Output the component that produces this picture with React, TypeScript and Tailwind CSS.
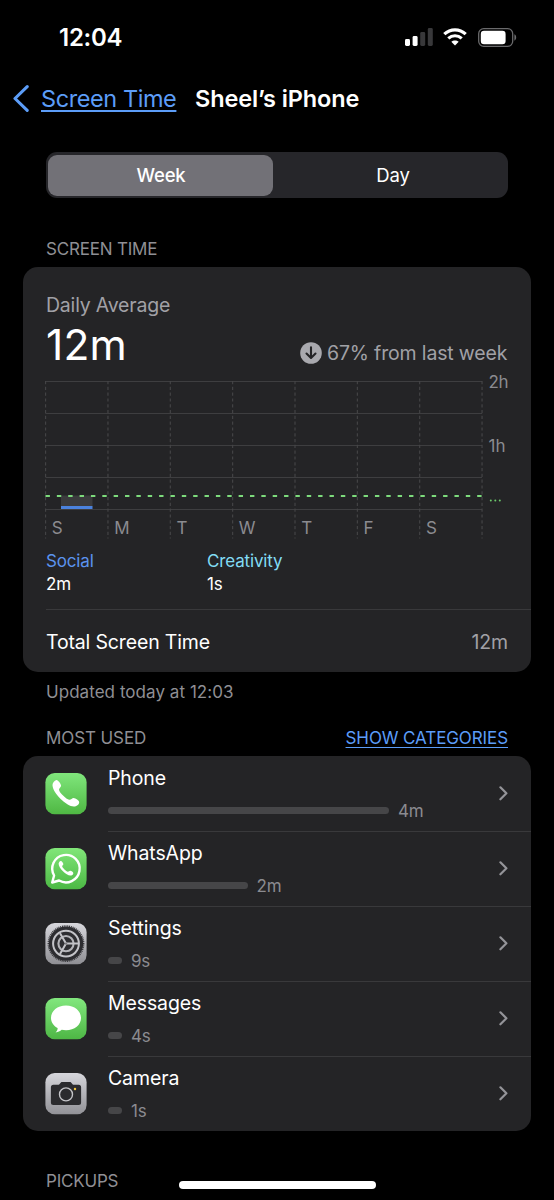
import type { ReactNode } from 'react';

const days = ['S', 'M', 'T', 'W', 'T', 'F', 'S'];

function StatusBar() {
  return (
    <div className="flex h-[74px] items-center justify-between pl-[59px] pr-[37px]">
      <span className="pt-px text-[24px] font-semibold leading-6 tracking-[-0.25px]">12:04</span>
      <div className="flex items-center">
        <svg width="28" height="18" viewBox="0 0 28 18" className="mr-[10px]">
          <rect x="0" y="11" width="5" height="7" rx="1.4" fill="#fff" />
          <rect x="7.6" y="8" width="5" height="10" rx="1.4" fill="#fff" />
          <rect x="15.2" y="4" width="5" height="14" rx="1.4" fill="#38383a" />
          <rect x="22.8" y="0" width="5" height="18" rx="1.4" fill="#38383a" />
        </svg>
        <svg width="24" height="18" viewBox="0 0 24 18" className="mr-[11px]" fill="none" stroke="#fff">
          <path d="M1.3 6.2C7.4.4 16.6.4 22.7 6.2" strokeWidth="3.2" />
          <path d="M5.3 10.4C9.2 6.8 14.8 6.8 18.7 10.4" strokeWidth="3.1" />
          <path d="M12 17.6L8.3 13.8C10.4 11.9 13.6 11.9 15.7 13.8Z" fill="#fff" stroke="none" />
        </svg>
        <svg width="39" height="19" viewBox="0 0 39 19">
          <rect x="0.7" y="0.7" width="34" height="17.6" rx="5" fill="none" stroke="#6a6a6c" strokeWidth="1.3" />
          <rect x="2.8" y="2.8" width="24.8" height="13.4" rx="3.2" fill="#fff" />
          <path d="M36.4 6.3C38.8 7.4 38.8 11.6 36.4 12.7Z" fill="#6a6a6c" />
        </svg>
      </div>
    </div>
  );
}

function NavBar() {
  return (
    <div className="flex h-[49px] items-center pl-[12px]">
      <svg width="18" height="28" viewBox="0 0 18 28" fill="none" stroke="#5c9df8" strokeWidth="3.1" strokeLinecap="round" strokeLinejoin="round">
        <path d="M15.2 1.7L3 13.5L15.2 25.3" />
      </svg>
      <a className="ml-[11px] w-[135px] whitespace-nowrap text-[23.5px] leading-7 tracking-[-0.42px] text-[#5c9df8] underline decoration-[1.5px] underline-offset-[3px]">
        Screen Time
      </a>
      <h1 className="ml-[19px] whitespace-nowrap text-[23.5px] font-semibold leading-7 tracking-[-0.12px]">Sheel’s iPhone</h1>
    </div>
  );
}

function Segmented() {
  return (
    <div className="mx-[46px] mt-[29px] flex h-[46px] rounded-[11px] bg-[#26262a] py-[2.5px] pl-[2px] pr-[2.5px] text-[18.5px] leading-[40px]">
      <div className="w-[224.5px] rounded-[9px] bg-[#727177] pl-[1.5px] text-center font-medium tracking-[-0.2px]">Week</div>
      <div className="flex-1 pl-[8px] text-center tracking-[-0.2px]">Day</div>
    </div>
  );
}

function UsageChart() {
  return (
    <svg width="485" height="165" viewBox="0 0 485 165" className="block overflow-visible">
      {[3, 35, 67, 99, 131].map((y) => (
        <path key={y} d={`M-.5 ${y + 0.5}H436`} stroke="#3e3e40" />
      ))}
      {[0, 1, 2, 3, 4, 5, 6, 7].map((i) => (
        <path key={i} d={`M${i * 62.35 - 0.4} 3V160.5`} stroke="#464648" strokeWidth="1.1" strokeDasharray="3.2 2.6" />
      ))}
      <rect x="15" y="117.5" width="31.5" height="11" fill="#3b3b3d" />
      <rect x="15" y="128" width="31.5" height="3" fill="#4b82dd" />
      <path d="M-.5 118H436" stroke="#7ddb7c" strokeWidth="2" strokeDasharray="4.4 6.96" />
      <g fill="#8b8b90" fontSize="17">
        {days.map((day, i) => (
          <text key={i} x={i * 62.35 + 5.8} y="156">{day}</text>
        ))}
        <text x="442.5" y="9.5" letterSpacing="-0.3">2h</text>
        <text x="442.5" y="73.5">1h</text>
      </g>
      <g fill="#6cc96b">
        <circle cx="444.8" cy="122.5" r="1" />
        <circle cx="449.3" cy="122.5" r="1" />
        <circle cx="453.8" cy="122.5" r="1" />
      </g>
    </svg>
  );
}

function ScreenTimeCard() {
  return (
    <section className="mx-[23px] h-[405px] rounded-[15px] bg-[#242426] pl-[23px]">
      <p className="pt-[26px] text-[19.5px] leading-6 tracking-[-0.2px] text-[#a1a1a6]">Daily Average</p>
      <div className="flex h-[61px] justify-between pr-[23px]">
        <p className="pt-[8px] text-[42.5px] leading-[40px] tracking-[0.1px]">12m</p>
        <div className="mt-[24px] flex h-6 items-center">
          <svg width="22" height="22" viewBox="0 0 22 22" className="mr-[5px]">
            <circle cx="11" cy="11" r="10.8" fill="#a9a9ae" />
            <path d="M11 5.2V15.8M6.5 11.5L11 16L15.5 11.5" fill="none" stroke="#242426" strokeWidth="2.1" strokeLinecap="round" strokeLinejoin="round" />
          </svg>
          <p className="w-[181px] whitespace-nowrap text-[19.5px] leading-6 tracking-[-0.16px] text-[#a1a1a6]">67% from last week</p>
        </div>
      </div>
      <UsageChart />
      <div className="flex h-[66px] text-[17px] leading-[23px] tracking-[-0.15px]">
        <div className="w-[161px] pt-[7px]">
          <p className="text-[#5b93ee]">Social</p>
          <p>2m</p>
        </div>
        <div className="pt-[7px]">
          <p className="text-[#82dcf4]">Creativity</p>
          <p>1s</p>
        </div>
      </div>
      <div className="flex h-[62px] items-center justify-between border-t border-[#39393b] pb-px pr-[23px] pt-[3px] text-[19.5px] leading-6 tracking-[-0.15px]">
        <span>Total Screen Time</span>
        <span className="text-[#a1a1a6]">12m</span>
      </div>
    </section>
  );
}

function AppTile({ from, to, children }: { from: string; to: string; children: ReactNode }) {
  return (
    <svg width="42" height="42" viewBox="0 0 42 42" className="shrink-0">
      <defs>
        <linearGradient id={`tile${from.slice(1)}`} x1="0" y1="0" x2="0" y2="1">
          <stop offset="0" stopColor={from} />
          <stop offset="1" stopColor={to} />
        </linearGradient>
      </defs>
      <g transform="translate(0 -.4)">
        <rect x="0.4" y="0.4" width="41.2" height="41.2" rx="9.3" fill={`url(#tile${from.slice(1)})`} />
        {children}
      </g>
    </svg>
  );
}

const handset =
  'M11.4 7.3C13 7 16.2 11.4 16.1 13.2C16 14.8 13.9 15.6 14 17.2C14.2 19.9 21.3 26.8 24.2 27.2C25.9 27.4 27.1 25.3 28.7 25.4C30.6 25.6 34.2 27.9 34.2 29.6C34.2 31.9 31.4 34 28.8 34C21.6 34 7.5 20.5 7.5 12.5C7.5 10.2 9.3 7.7 11.4 7.3Z';

function PhoneIcon() {
  return (
    <AppTile from="#80e67c" to="#4fb843">
      <path d={handset} fill="#fff" />
    </AppTile>
  );
}

function WhatsAppIcon() {
  return (
    <AppTile from="#81e679" to="#4cb944">
      <path
        d="M7.2 34.9L9.1 27.9A13.7 13.7 0 1 1 14.1 32.9Z"
        fill="none"
        stroke="#fff"
        strokeWidth="2.4"
        strokeLinejoin="round"
      />
      <path d={handset} transform="translate(9.5 9.3) scale(.55)" fill="#fff" />
    </AppTile>
  );
}

function SettingsIcon() {
  return (
    <AppTile from="#d7d7dc" to="#8f8f94">
      <circle cx="21" cy="21" r="17.6" fill="none" stroke="#38383c" strokeWidth="1.6" strokeDasharray="1 0.82" />
      <circle cx="21" cy="21" r="15.2" fill="none" stroke="#2c2c30" strokeWidth="4" />
      <circle cx="21" cy="21" r="12.9" fill="#2e2e32" stroke="#c3c3c8" strokeWidth="2" />
      <circle cx="21" cy="21" r="7.6" fill="none" stroke="#b4b4b9" strokeWidth="2.1" />
      <path d="M21 21H33M21 21L15 10.6M21 21L15 31.4" stroke="#c3c3c8" strokeWidth="2" />
      <circle cx="21" cy="21" r="1.2" fill="#7d7d81" />
    </AppTile>
  );
}

function MessagesIcon() {
  return (
    <AppTile from="#82e77e" to="#4eb745">
      <path
        d="M21 8C29.5 8 36 13.5 36 20.4C36 27.3 29.5 32.7 21 32.7C19.5 32.7 18 32.5 16.7 32.2C15.1 33.7 13 34.7 10.6 34.8C12 33.5 12.7 32 12.6 30.5C8.6 28.3 6 24.6 6 20.4C6 13.5 12.5 8 21 8Z"
        fill="#fff"
      />
    </AppTile>
  );
}

function CameraIcon() {
  return (
    <AppTile from="#d6d6db" to="#929297">
      <path
        d="M8.4 12.2H13.2C14.8 12.2 15.2 9.3 17.2 9.3H24.8C26.8 9.3 27.2 12.2 28.8 12.2H33.6A2.5 2.5 0 0 1 36.1 14.7V29.9A2.5 2.5 0 0 1 33.6 32.4H8.4A2.5 2.5 0 0 1 5.9 29.9V14.7A2.5 2.5 0 0 1 8.4 12.2Z"
        fill="#2b2b2e"
      />
      <circle cx="21" cy="21.8" r="6.5" fill="none" stroke="#c3c3c7" strokeWidth="1.4" />
      <circle cx="30" cy="16.4" r="1.2" fill="#f4c63d" />
    </AppTile>
  );
}

const apps = [
  { name: 'Phone', time: '4m', bar: 281, icon: <PhoneIcon /> },
  { name: 'WhatsApp', time: '2m', bar: 139.5, icon: <WhatsAppIcon /> },
  { name: 'Settings', time: '9s', bar: 14, icon: <SettingsIcon /> },
  { name: 'Messages', time: '4s', bar: 14, icon: <MessagesIcon /> },
  { name: 'Camera', time: '1s', bar: 14, icon: <CameraIcon /> },
];

function MostUsed() {
  return (
    <section className="mx-[23px] rounded-[15px] bg-[#242426] pl-[22px]">
      {apps.map((app, i) => (
        <div key={app.name} className="flex h-[75px] items-center">
          {app.icon}
          <div className={`ml-[21px] flex h-full flex-1 items-center justify-between border-t pr-[23px] ${i > 0 ? 'border-[#39393b]' : 'border-transparent'}`}>
            <div>
              <p className="pb-[9px] text-[19.5px] leading-6 tracking-[-0.12px]">{app.name}</p>
              <div className="flex items-center gap-[9px]">
                <div className="h-[7.5px] rounded-full bg-[#464648]" style={{ width: app.bar }} />
                <span className="text-[17px] leading-6 tracking-[-0.2px] text-[#8b8b90]">{app.time}</span>
              </div>
            </div>
            <svg width="10" height="16" viewBox="0 0 10 16" fill="none" stroke="#949499" strokeWidth="2.2" strokeLinecap="round" strokeLinejoin="round">
              <path d="M2.4 1.3L8.4 7.3L2.4 13.3" />
            </svg>
          </div>
        </div>
      ))}
    </section>
  );
}

export default function App() {
  return (
    <div className="relative h-[1200px] w-[554px] overflow-hidden bg-black font-['Inter',sans-serif] text-white">
      <StatusBar />
      <NavBar />
      <Segmented />
      <h2 className="mt-[39px] h-[30px] pl-[46px] text-[17px] leading-6 tracking-[-0.2px] text-[#8f8f94]">SCREEN TIME</h2>
      <ScreenTimeCard />
      <p className="mt-[8px] pl-[46px] text-[17px] leading-6 tracking-[0.05px] text-[#8f8f94]">Updated today at 12:03</p>
      <div className="mt-[22px] flex h-[30px] justify-between pl-[46px] pr-[46px] text-[17px] leading-6 tracking-[-0.1px]">
        <h2 className="text-[#8f8f94]">MOST USED</h2>
        <a className="text-[#5c9df8] underline decoration-[1.4px] underline-offset-[2.5px]">SHOW CATEGORIES</a>
      </div>
      <MostUsed />
      <h2 className="mt-[38px] pl-[46px] text-[17px] leading-6 tracking-[-0.2px] text-[#8f8f94]">PICKUPS</h2>
      {/* home indicator */}
      <div className="absolute bottom-[11.5px] left-[178.5px] h-[7.5px] w-[197.5px] rounded-full bg-white" />
    </div>
  );
}
